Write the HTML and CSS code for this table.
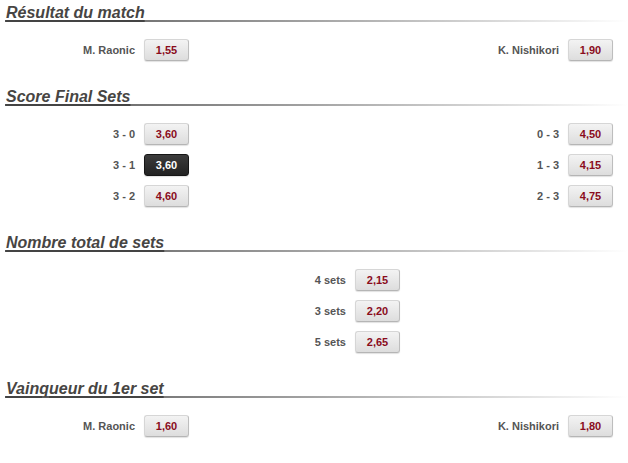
FILE: index.html
```html
<!DOCTYPE html>
<html lang="fr">

<head>
    <meta charset="UTF-8">
    <meta name="viewport" content="width=device-width, initial-scale=1.0">
    <title>Paris tennis</title>
    <link rel="stylesheet" href="styles.css">
</head>

<body>
    <div class="page">
        <div class="market">
            <h2 class="title"><span>Résultat du match</span></h2>
            <div class="rows">
                <div class="row">
                    <div class="pick colLeft"><span class="label">M. Raonic</span><span class="odd">1,55</span></div>
                    <div class="pick colRight"><span class="label">K. Nishikori</span><span class="odd">1,90</span></div>
                </div>
            </div>
        </div>

        <div class="market">
            <h2 class="title"><span>Score Final Sets</span></h2>
            <div class="rows">
                <div class="row">
                    <div class="pick colLeft"><span class="label">3 - 0</span><span class="odd">3,60</span></div>
                    <div class="pick colRight"><span class="label">0 - 3</span><span class="odd">4,50</span></div>
                </div>
                <div class="row">
                    <div class="pick colLeft"><span class="label">3 - 1</span><span class="odd active">3,60</span></div>
                    <div class="pick colRight"><span class="label">1 - 3</span><span class="odd">4,15</span></div>
                </div>
                <div class="row">
                    <div class="pick colLeft"><span class="label">3 - 2</span><span class="odd">4,60</span></div>
                    <div class="pick colRight"><span class="label">2 - 3</span><span class="odd">4,75</span></div>
                </div>
            </div>
        </div>

        <div class="market">
            <h2 class="title"><span>Nombre total de sets</span></h2>
            <div class="rows">
                <div class="row">
                    <div class="pick colMid"><span class="label">4 sets</span><span class="odd">2,15</span></div>
                </div>
                <div class="row">
                    <div class="pick colMid"><span class="label">3 sets</span><span class="odd">2,20</span></div>
                </div>
                <div class="row">
                    <div class="pick colMid"><span class="label">5 sets</span><span class="odd">2,65</span></div>
                </div>
            </div>
        </div>

        <div class="market">
            <h2 class="title"><span>Vainqueur du 1er set</span></h2>
            <div class="rows">
                <div class="row">
                    <div class="pick colLeft"><span class="label">M. Raonic</span><span class="odd">1,60</span></div>
                    <div class="pick colRight"><span class="label">K. Nishikori</span><span class="odd">1,80</span></div>
                </div>
            </div>
        </div>
    </div>
</body>

</html>
```

FILE: styles.css
```css
* {
    margin: 0;
    padding: 0;
    box-sizing: border-box;
}

body {
    background-color: #ffffff;
    font-family: "Liberation Sans", Arial, sans-serif;
}

.page {
    width: 628px;
    padding-top: 4px;
}

.market {
    margin-bottom: 27px;
}

.title {
    height: 18px;
    margin-left: 5px;
    padding-left: 1px;
    font-size: 16px;
    line-height: 17px;
    font-weight: bold;
    font-style: italic;
    color: #474543;
    background-image: linear-gradient(to right, #505050, #9c9c9c 45%, #ffffff);
    background-size: 100% 2px;
    background-position: left bottom;
    background-repeat: no-repeat;
}

.title span {
    text-decoration: underline;
    text-decoration-thickness: 2px;
    text-underline-offset: 2px;
    text-decoration-color: #444444;
}

.rows {
    display: flex;
    flex-direction: column;
    gap: 9px;
    margin-top: 17px;
}

.row {
    display: grid;
    grid-template-columns: 189px 211px 213px;
}

.pick {
    display: flex;
    align-items: center;
    justify-content: flex-end;
    gap: 9px;
}

.colLeft {
    grid-column: 1;
}

.colMid {
    grid-column: 2;
}

.colRight {
    grid-column: 3;
}

.label {
    font-size: 11px;
    font-weight: bold;
    color: #555555;
}

.odd {
    display: flex;
    align-items: center;
    justify-content: center;
    width: 45px;
    height: 22px;
    font-size: 11px;
    font-weight: bold;
    color: #8a0c1c;
    background: linear-gradient(#f3f3f3, #dddddd);
    border: 1px solid #d6d6d6;
    border-right-color: #bdbdbd;
    border-bottom-color: #b5b5b5;
    border-radius: 3px;
    box-shadow: 0 1px 1px rgba(0, 0, 0, .12);
    cursor: pointer;
}

.odd.active {
    color: #ffffff;
    background: linear-gradient(#3c3c3c, #222222);
    border-color: #151515;
}
```
